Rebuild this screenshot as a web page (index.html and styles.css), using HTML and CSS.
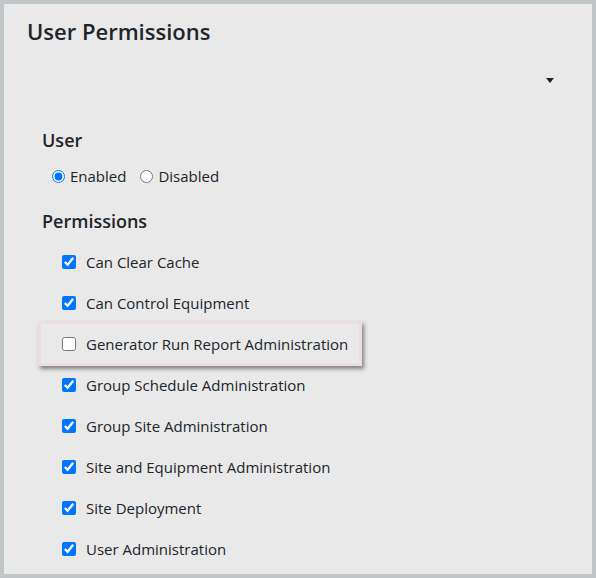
FILE: index.html
```html
<!DOCTYPE html>
<html lang="en">
<head>
<meta charset="utf-8">
<title>User Permissions</title>
<link rel="stylesheet" href="styles.css">
</head>
<body>
<div class="panel">
  <h1 class="title">User Permissions</h1>
  <div class="select-row"><span class="caret"></span></div>
  <div class="section">
    <h2 class="heading">User</h2>
    <div class="radios">
      <label class="radio"><input type="radio" name="state" checked> Enabled</label>
      <label class="radio"><input type="radio" name="state"> Disabled</label>
    </div>
    <h2 class="heading heading-perm">Permissions</h2>
    <ul class="perm-list">
      <li class="perm"><label><input type="checkbox" checked><span>Can Clear Cache</span></label></li>
      <li class="perm"><label><input type="checkbox" checked><span>Can Control Equipment</span></label></li>
      <li class="perm perm-highlight"><label><input type="checkbox"><span>Generator Run Report Administration</span></label></li>
      <li class="perm"><label><input type="checkbox" checked><span>Group Schedule Administration</span></label></li>
      <li class="perm"><label><input type="checkbox" checked><span>Group Site Administration</span></label></li>
      <li class="perm"><label><input type="checkbox" checked><span>Site and Equipment Administration</span></label></li>
      <li class="perm"><label><input type="checkbox" checked><span>Site Deployment</span></label></li>
      <li class="perm"><label><input type="checkbox" checked><span>User Administration</span></label></li>
    </ul>
  </div>
</div>
</body>
</html>
```
FILE: styles.css
```css
* { box-sizing: border-box; }
html, body {
  margin: 0;
  padding: 0;
  background: #c1c7c9;
}
body {
  padding: 4px;
  font-family: "Open Sans", "Noto Sans", sans-serif;
  color: #212529;
}
.panel {
  background: #e9e9e9;
  height: 570px;
  padding: 12px 0 0 23px;
  overflow: hidden;
}
.title {
  margin: 0;
  font-size: 22px;
  line-height: 30px;
  font-weight: 600;
}
.select-row {
  margin-top: 20px;
  height: 29px;
  display: flex;
  align-items: center;
  justify-content: flex-end;
  padding-right: 38px;
}
.caret {
  width: 0;
  height: 0;
  border-left: 4px solid transparent;
  border-right: 4px solid transparent;
  border-top: 5px solid #222;
}
.section {
  padding-left: 15px;
}
.heading {
  margin: 33px 0 0;
  font-size: 18px;
  line-height: 24px;
  font-weight: 600;
}
.heading-perm {
  margin-top: 21px;
}
.radios {
  margin-top: 12px;
  height: 24px;
  display: flex;
  align-items: center;
  gap: 14px;
  padding-left: 10px;
  font-size: 15px;
}
.radio {
  display: flex;
  align-items: center;
  gap: 5px;
}
.radio input {
  margin: 0;
  width: 13px;
  height: 13px;
}
.perm-list {
  list-style: none;
  margin: 8px 0 0;
  padding: 0;
}
.perm {
  height: 41px;
  display: flex;
  align-items: center;
  padding-left: 20px;
  font-size: 15px;
}
.perm label {
  display: flex;
  align-items: center;
  gap: 10px;
}
.perm input {
  margin: 0;
  width: 14px;
  height: 14px;
}
.perm-highlight {
  height: 45px;
  margin: -2px 0 -2px -4px;
  width: 324px;
  padding-left: 21px;
  border: 3px solid #ecdede;
  box-shadow: 2px 3px 4px rgba(0, 0, 0, 0.45);
}
```
